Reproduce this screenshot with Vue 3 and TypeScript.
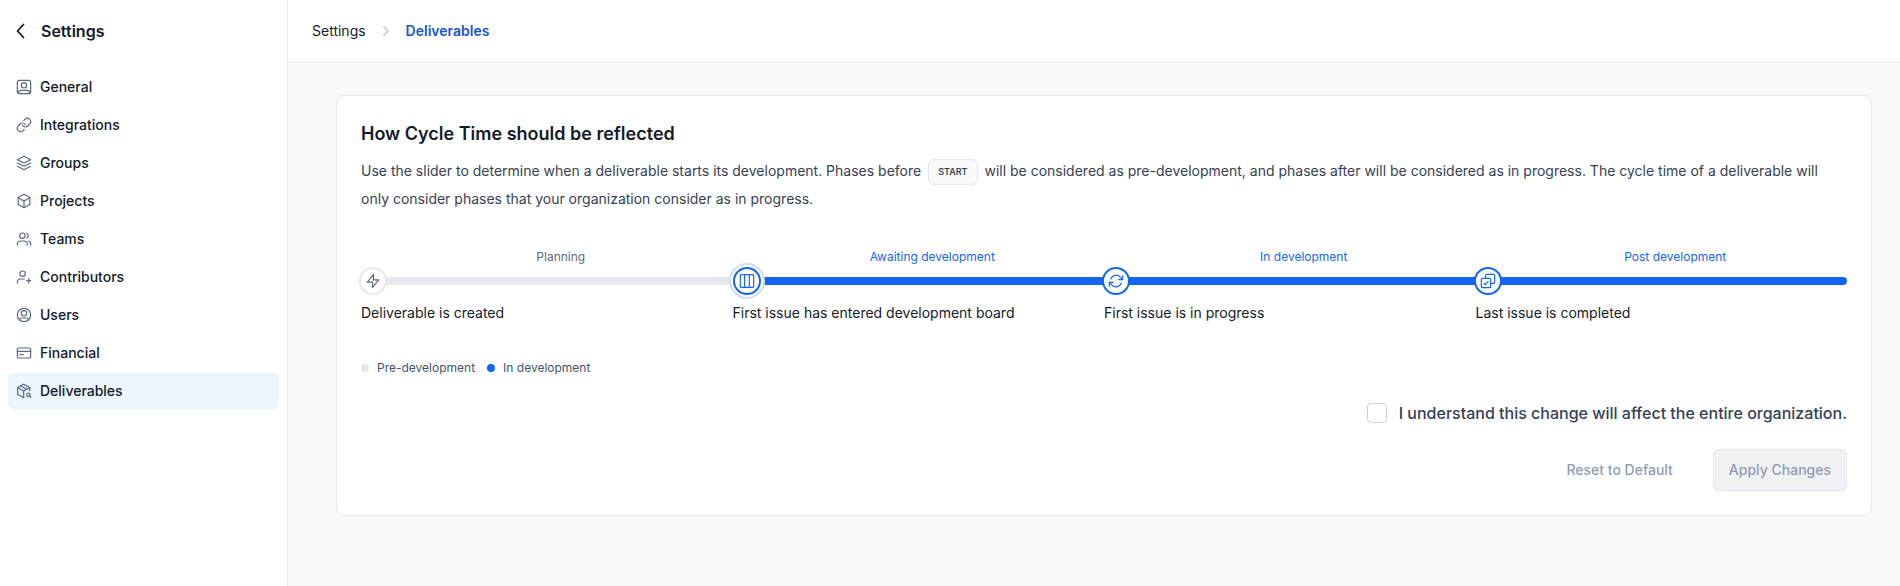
<script setup lang="ts">
import { computed, ref } from 'vue'

interface NavItem {
  label: string
  paths: string[]
}

interface Milestone {
  phase: string
  caption: string
  paths: string[]
}

const navItems: NavItem[] = [
  {
    label: 'General',
    paths: [
      'M5 2h14a3 3 0 0 1 3 3v14a3 3 0 0 1-3 3H5a3 3 0 0 1-3-3V5a3 3 0 0 1 3-3Z',
      'M16 9.500a4 4 0 1 1-8 0 4 4 0 0 1 8 0Z',
      'M3 21.200c.5-2.700 2.200-4.200 4.700-4.200h8.600c2.500 0 4.200 1.500 4.700 4.200',
    ],
  },
  {
    label: 'Integrations',
    paths: [
      'M10 13a5 5 0 0 0 7.540.54l3-3a5 5 0 0 0-7.070-7.070l-1.720 1.710',
      'M14 11a5 5 0 0 0-7.540-.54l-3 3a5 5 0 0 0 7.070 7.070l1.710-1.710',
    ],
  },
  {
    label: 'Groups',
    paths: ['M12 2 2 7l10 5 10-5L12 2Z', 'm2 12 10 5 10-5', 'm2 17 10 5 10-5'],
  },
  {
    label: 'Projects',
    paths: [
      'M12 2 20.700 6.800v10.400L12 22l-8.700-4.800V6.800L12 2Z',
      'M3.500 7.200 12 12l8.500-4.800',
      'M12 12v9.500',
    ],
  },
  {
    label: 'Teams',
    paths: [
      'M22 21v-2a4 4 0 0 0-3-3.870',
      'M16 3.300a4 4 0 0 1 0 7.400',
      'M13.500 7a4 4 0 1 1-8 0 4 4 0 0 1 8 0Z',
      'M2 21v-1a5 5 0 0 1 5-5h5a5 5 0 0 1 5 5v1',
    ],
  },
  {
    label: 'Contributors',
    paths: [
      'M14 7a4 4 0 1 1-8 0 4 4 0 0 1 8 0Z',
      'M2 21v-1a5 5 0 0 1 5-5h5.500',
      'M19 14.500v6',
      'M16 17.500h6',
    ],
  },
  {
    label: 'Users',
    paths: [
      'M22 12a10 10 0 1 1-20 0 10 10 0 0 1 20 0Z',
      'M16 9.500a4 4 0 1 1-8 0 4 4 0 0 1 8 0Z',
      'M5.300 19.300C5.800 17.500 7.300 16.500 9 16.500h6c1.700 0 3.200 1 3.700 2.800',
    ],
  },
  {
    label: 'Financial',
    paths: [
      'M4 4.500h16a2 2 0 0 1 2 2v11a2 2 0 0 1-2 2H4a2 2 0 0 1-2-2v-11a2 2 0 0 1 2-2Z',
      'M2 9.500h20',
      'M6 14.500h5',
    ],
  },
  {
    label: 'Deliverables',
    paths: [
      'M20.500 11.500V6.800L11.500 2 2.500 6.800v10.400l9 4.800V12',
      'M2.700 7 11.500 12l8.800-5',
      'M7 4.500 16 9.500',
      'M21 17.500a2.500 2.500 0 1 1-5 0 2.500 2.500 0 0 1 5 0Z',
      'm20.500 19.500 1.700 2',
    ],
  },
]

const milestones: Milestone[] = [
  {
    phase: 'Planning',
    caption: 'Deliverable is created',
    paths: ['M13 2 3.500 13.800h8L11 22l9.500-11.800h-8L13 2Z'],
  },
  {
    phase: 'Awaiting development',
    caption: 'First issue has entered development board',
    paths: [
      'M3.500 2.500h17A1.500 1.500 0 0 1 22 4v16a1.500 1.500 0 0 1-1.500 1.500h-17A1.500 1.500 0 0 1 2 20V4a1.500 1.500 0 0 1 1.500-1.500Z',
      'M8.500 2.500v19',
      'M15.500 2.500v19',
    ],
  },
  {
    phase: 'In development',
    caption: 'First issue is in progress',
    paths: [
      'M22 4v6h-6',
      'M2 20v-6h6',
      'M4 9a8.500 8.500 0 0 1 14-3.300L22 10',
      'M2 14l4 4.300A8.500 8.500 0 0 0 20 15',
    ],
  },
  {
    phase: 'Post development',
    caption: 'Last issue is completed',
    paths: [
      'M8.500 8V3.500A1.500 1.500 0 0 1 10 2h10.500A1.500 1.500 0 0 1 22 3.500V14a1.500 1.500 0 0 1-1.500 1.500H16',
      'M3.500 8h11A1.500 1.500 0 0 1 16 9.500v11a1.500 1.500 0 0 1-1.500 1.500h-11A1.500 1.500 0 0 1 2 20.500v-11A1.500 1.500 0 0 1 3.500 8Z',
      'm6 15.500 2 2 4-4.500',
    ],
  },
]

const start = ref(1)
const understood = ref(false)

const trackStyle = computed(() => {
  const split = `${(start.value / milestones.length) * 100}%`
  return {
    background: `linear-gradient(to right, #e7e8ed ${split}, #1566ee ${split})`,
  }
})

function reset(): void {
  start.value = 1
  understood.value = false
}
</script>

<template>
  <div class="page">
    <aside class="sidebar">
      <a class="back" href="#">
        <svg class="back-icon" viewBox="0 0 16 16" aria-hidden="true">
          <path d="M10.500 1.500 4.500 8l6 6.500" />
        </svg>
        Settings
      </a>
      <nav class="nav" aria-label="Settings">
        <a
          v-for="item in navItems"
          :key="item.label"
          class="nav-link"
          :class="{ active: item.label === 'Deliverables' }"
          href="#"
        >
          <svg class="nav-icon" viewBox="0 0 24 24" aria-hidden="true">
            <path v-for="d in item.paths" :key="d" :d="d" />
          </svg>
          {{ item.label }}
        </a>
      </nav>
    </aside>

    <div class="content">
      <header class="topbar">
        <a class="crumb" href="#">Settings</a>
        <svg class="crumb-icon" viewBox="0 0 16 16" aria-hidden="true">
          <path d="m6 4 4 4-4 4" />
        </svg>
        <a class="crumb current" href="#" aria-current="page">Deliverables</a>
      </header>

      <main class="main">
        <section class="card">
          <h1 class="title">How Cycle Time should be reflected</h1>
          <p class="description">
            Use the slider to determine when a deliverable starts its development. Phases before
            <span class="badge">START</span>
            will be considered as pre-development, and phases after will be considered as in progress.
            The cycle time of a deliverable will only consider phases that your organization consider
            as in progress.
          </p>

          <div class="timeline">
            <div class="columns phases">
              <span
                v-for="(m, i) in milestones"
                :key="m.phase"
                class="phase"
                :class="{ on: i >= start }"
              >{{ m.phase }}</span>
            </div>
            <div class="rail">
              <input
                v-model.number="start"
                class="slider"
                :style="trackStyle"
                type="range"
                min="0"
                max="3"
                step="1"
                aria-label="Start of development"
              />
              <div class="columns nodes">
                <span
                  v-for="(m, i) in milestones"
                  :key="m.phase"
                  class="node"
                  :class="{ on: i >= start, handle: i === start }"
                >
                  <svg class="node-icon" viewBox="0 0 24 24" aria-hidden="true">
                    <path v-for="d in m.paths" :key="d" :d="d" />
                  </svg>
                </span>
              </div>
            </div>
            <div class="columns captions">
              <span v-for="m in milestones" :key="m.caption">{{ m.caption }}</span>
            </div>
          </div>

          <div class="legend">
            <span class="legend-item"><i class="dot"></i>Pre-development</span>
            <span class="legend-item"><i class="dot on"></i>In development</span>
          </div>

          <label class="consent">
            <input v-model="understood" class="checkbox" type="checkbox" />
            I understand this change will affect the entire organization.
          </label>

          <div class="actions">
            <button class="button plain" type="button" @click="reset">Reset to Default</button>
            <button class="button apply" type="button" :disabled="!understood">Apply Changes</button>
          </div>
        </section>
      </main>
    </div>
  </div>
</template>

<style>
body {
  background: #f8f9fb;
}
</style>

<style scoped>
.page {
  display: flex;
  min-height: 100vh;
  color: #131a29;
  font-family: Inter, 'Liberation Sans', sans-serif;
  font-size: 14px;
  line-height: 20px;
}

.page *,
.page {
  box-sizing: border-box;
}

a {
  color: inherit;
  text-decoration: none;
}

svg {
  flex: none;
  fill: none;
  stroke: currentColor;
  stroke-width: 1.8;
  stroke-linecap: round;
  stroke-linejoin: round;
}

.sidebar {
  flex: none;
  width: 288px;
  padding: 0 8px;
  background: #fff;
  border-right: 1px solid #e7e8ed;
}

.back {
  display: flex;
  align-items: center;
  gap: 12px;
  height: 62px;
  padding-left: 5px;
  font-size: 16px;
  font-weight: 600;
}

.back-icon {
  width: 16px;
  height: 16px;
}

.nav {
  display: flex;
  flex-direction: column;
  gap: 2px;
  padding-top: 7px;
}

.nav-link {
  display: flex;
  align-items: center;
  gap: 8px;
  height: 36px;
  padding: 0 8px;
  border-radius: 6px;
  font-weight: 500;
}

.nav-link.active {
  background: #ebf6ff;
}

.nav-icon {
  width: 16px;
  height: 16px;
  color: #5d6980;
}

.content {
  flex: 1;
  min-width: 0;
}

.topbar {
  display: flex;
  align-items: center;
  gap: 12px;
  height: 63px;
  padding: 0 24px;
  background: #fff;
  border-bottom: 1px solid #e7e8ed;
}

.crumb-icon {
  width: 16px;
  height: 16px;
  color: #cdd1da;
}

.crumb.current {
  color: #1855d3;
  font-weight: 600;
}

.main {
  padding: 32px 28px 48px 48px;
}

.card {
  padding: 24px;
  background: #fff;
  border: 1px solid #e7e8ed;
  border-radius: 8px;
}

.title {
  margin: 0;
  font-size: 18px;
  font-weight: 600;
  line-height: 28px;
}

.description {
  margin: 9px 0 0;
  color: #364154;
  line-height: 27px;
}

.badge {
  display: inline-flex;
  align-items: center;
  height: 26px;
  margin: 0 3px;
  padding: 0 9px;
  border: 1px solid #e7e8ed;
  border-radius: 6px;
  background: #f8f9fb;
  font-size: 9px;
  font-weight: 600;
  line-height: 12px;
  vertical-align: middle;
}

.timeline {
  margin-top: 36px;
}

.columns {
  display: grid;
  grid-template-columns: repeat(4, 1fr);
}

.phase {
  padding-left: 28px;
  color: #5d6980;
  font-size: 12px;
  line-height: 18px;
  text-align: center;
}

.phase.on {
  color: #1566ee;
}

.rail {
  display: grid;
  align-items: center;
  height: 28px;
  margin-top: 1px;
}

.slider,
.nodes {
  grid-area: 1 / 1;
}

.slider {
  appearance: none;
  width: 100%;
  height: 8px;
  margin: 0;
  border-radius: 4px;
  cursor: pointer;
}

.slider::-webkit-slider-thumb {
  appearance: none;
  width: 28px;
  height: 28px;
  background: transparent;
}

.nodes {
  z-index: 1;
  margin-left: -2px;
  margin-right: 2px;
  pointer-events: none;
}

.node {
  display: flex;
  align-items: center;
  justify-content: center;
  width: 28px;
  height: 28px;
  border: 2px solid #e7e8ed;
  border-radius: 50%;
  background: #fff;
  color: #5d6980;
}

.node.on {
  border-color: #1566ee;
  color: #1566ee;
}

.node.handle {
  margin-left: 2px;
  box-shadow: 0 0 0 2px #fff, 0 0 0 4px #d0e0fc;
}

.node-icon {
  width: 16px;
  height: 16px;
}

.captions {
  margin-top: 8px;
}

.legend {
  display: flex;
  gap: 12px;
  margin-top: 36px;
  color: #475467;
  font-size: 12px;
  line-height: 18px;
}

.legend-item {
  display: flex;
  align-items: center;
  gap: 8px;
}

.dot {
  width: 8px;
  height: 8px;
  border-radius: 50%;
  background: #e7e8ed;
}

.dot.on {
  background: #1566ee;
}

.consent {
  display: flex;
  align-items: center;
  gap: 12px;
  width: fit-content;
  margin: 24px 0 0 auto;
  color: #364154;
  font-size: 16px;
  font-weight: 500;
  line-height: 24px;
}

.checkbox {
  appearance: none;
  width: 20px;
  height: 20px;
  margin: 0;
  border: 1px solid #cdd1da;
  border-radius: 4px;
  background: #fff;
}

.checkbox:checked {
  border-color: #1566ee;
  background: #1566ee;
}

.actions {
  display: flex;
  justify-content: flex-end;
  gap: 24px;
  margin-top: 24px;
}

.button {
  height: 42px;
  padding: 0 15px;
  border: 1px solid transparent;
  border-radius: 6px;
  background: transparent;
  color: #929cb0;
  font: inherit;
  font-weight: 500;
}

.button.apply {
  border-color: #e7e8ed;
  background: #eff1f5;
  box-shadow: 0 1px 2px rgba(16, 24, 40, 0.05);
}

.button.apply:enabled {
  background: #1566ee;
  color: #fff;
}
</style>
